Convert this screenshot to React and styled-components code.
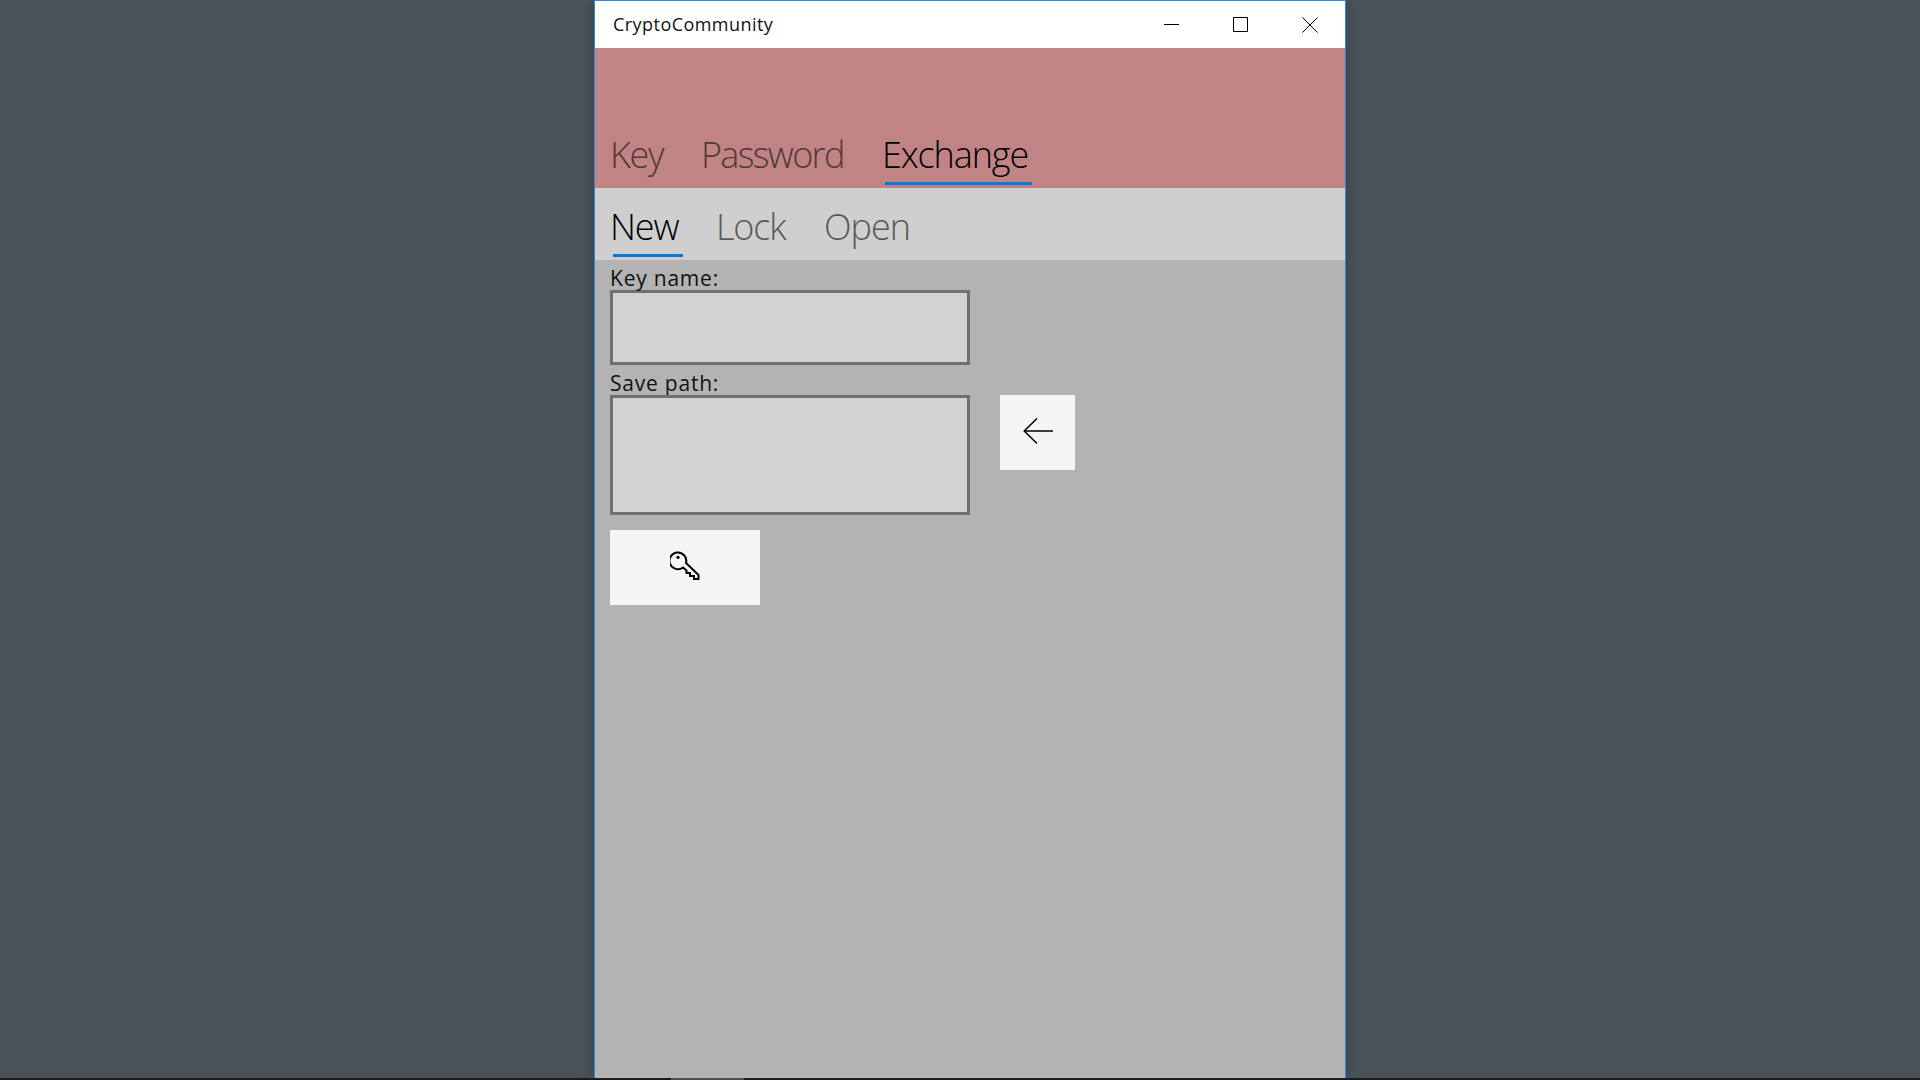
import React from "react";
import styled, { createGlobalStyle } from "styled-components";

const Global = createGlobalStyle`
  html, body { margin: 0; padding: 0; width: 1920px; height: 1080px; overflow: hidden; background: #4b535a; }
  #root { width: 1920px; height: 1080px; }
`;
const font = `"Open Sans", "Noto Sans", "Liberation Sans", sans-serif`;

const Screen = styled.div`
  width: 1920px; height: 1080px; display: flex; flex-direction: column; background: #4b535a; font-family: ${font};
`;
const Desktop = styled.div`
  flex: 1; min-height: 0; display: flex; padding-left: 594px;
`;
const Taskbar = styled.div`
  height: 2px; background: #1a1d20; padding-left: 671px; display: flex;
`;
const TaskbarThumb = styled.div`
  width: 73px; background: #4d4f52;
`;
const Window = styled.div`
  width: 752px; box-sizing: border-box; display: flex; flex-direction: column;
  border: 1px solid #2b8ae0; border-bottom: 0; background: #b3b3b3;
  box-shadow: 0 0 14px rgba(0,0,0,0.28);
`;
const TitleBar = styled.div`
  height: 47px; flex: none; background: #fff; display: flex; align-items: center; padding-left: 18px; position: relative;
`;
const Title = styled.div`
  flex: 1; font-size: 18px; letter-spacing: 0.45px; color: #111; padding-bottom: 2px;
`;
const WinButton = styled.div`
  width: 69px; height: 47px; display: flex; align-items: center; justify-content: center;
`;
const WinButtons = styled.div`
  display: flex; margin-right: 1px;
`;
const HeaderPivot = styled.div`
  height: 140px; flex: none; background: #c18484; display: flex; align-items: flex-end; padding-left: 15px;
`;
const SubPivot = styled.div`
  height: 72px; flex: none; background: #cfcfcf; display: flex; align-items: flex-end; padding-left: 15px;
`;
const Tab = styled.div`
  width: ${p => p.$w}px; display: flex; flex-direction: column; align-items: flex-start;
  flex: none;
`;
const TabLabel = styled.div`
  font-size: 36px; font-weight: 300; height: 48px; line-height: 50px; letter-spacing: ${p => p.$ls}px; white-space: nowrap;
  color: ${p => p.$active ? "#000" : p.$muted};
`;
const Underline = styled.div`
  height: 3px; width: ${p => p.$w}px; margin: 4px 0 3px 3px; background: ${p => p.$w ? "#0a78d7" : "transparent"};
`;
const Content = styled.div`
  flex: 1; padding: 0 0 0 15px; display: flex; flex-direction: column;
`;
const Label = styled.div`
  font-size: 21px; line-height: 36px; height: 30px; letter-spacing: 0.78px; color: #111;
`;
const Field = styled.div`
  width: 360px; height: ${p => p.$h}px; box-sizing: border-box; border: 3px solid #707070; background: #d2d2d2;
`;
const Row = styled.div`
  display: flex; gap: 30px; align-items: flex-start;
`;
const IconButton = styled.div`
  width: ${p => p.$w}px; height: 75px; background: #f5f5f5; display: flex; align-items: center; justify-content: center; flex: none;
`;
const Group = styled.div`
  margin-bottom: ${p => p.$mb || 0}px;
`;
const ArrowGlyph = styled.svg`
  margin-bottom: 3px;
`;
const KeyGlyph = styled.svg`
  margin-bottom: 5px;
`;

const Minimize = () => <svg width="15" height="15" viewBox="0 0 15 15"><path d="M0 7.5h15" stroke="#000" fill="none" /></svg>;
const Maximize = () => <svg width="15" height="15" viewBox="0 0 15 15"><path d="M.5.5h14v14H.5z" stroke="#000" fill="none" /></svg>;
const Close = () => <svg width="16" height="16" viewBox="0 0 16 16"><path d="M.5.5l15 15M15.5.5l-15 15" stroke="#000" fill="none" /></svg>;
const Arrow = () => (
  <ArrowGlyph width="30" height="26" viewBox="0 0 30 26"><path d="M30 13H1M14 .5L1.2 13 14 25.5" stroke="#000" strokeWidth="1.5" fill="none" /></ArrowGlyph>
);
const KeyIcon = () => (
  <KeyGlyph width="30" height="30" viewBox="0 0 30 30">
    <path d="M13 17.5A8.4 8.4 0 1 1 16 13L28.5 25V29H24V26H20V23H16.5V20.5Z" stroke="#000" strokeWidth="2" fill="none" />
    <circle cx="8" cy="7.3" r="1.6" fill="#000" />
  </KeyGlyph>
);

export default function App() {
  return (
    <Screen>
      <Global />
      <Desktop>
        <Window>
          <TitleBar>
            <Title>CryptoCommunity</Title>
            <WinButtons>
              <WinButton><Minimize /></WinButton>
              <WinButton><Maximize /></WinButton>
              <WinButton><Close /></WinButton>
            </WinButtons>
          </TitleBar>
          <HeaderPivot>
            <Tab $w={91}><TabLabel $muted="#53393a" $ls={-1.4}>Key</TabLabel><Underline /></Tab>
            <Tab $w={181}><TabLabel $muted="#53393a" $ls={-1.7}>Password</TabLabel><Underline /></Tab>
            <Tab $w={200}><TabLabel $active $ls={-1.1}>Exchange</TabLabel><Underline $w={147} /></Tab>
          </HeaderPivot>
          <SubPivot>
            <Tab $w={106}><TabLabel $active $ls={-1.1}>New</TabLabel><Underline $w={70} /></Tab>
            <Tab $w={108}><TabLabel $muted="#595959" $ls={-1.1}>Lock</TabLabel><Underline /></Tab>
            <Tab $w={120}><TabLabel $muted="#595959" $ls={-1}>Open</TabLabel><Underline /></Tab>
          </SubPivot>
          <Content>
            <Group>
              <Label>Key name:</Label>
              <Field $h={75} />
            </Group>
            <Group $mb={15}>
              <Label>Save path:</Label>
              <Row>
                <Field $h={120} />
                <IconButton $w={75}><Arrow /></IconButton>
              </Row>
            </Group>
            <IconButton $w={150}><KeyIcon /></IconButton>
          </Content>
        </Window>
      </Desktop>
      <Taskbar><TaskbarThumb /></Taskbar>
    </Screen>
  );
}
